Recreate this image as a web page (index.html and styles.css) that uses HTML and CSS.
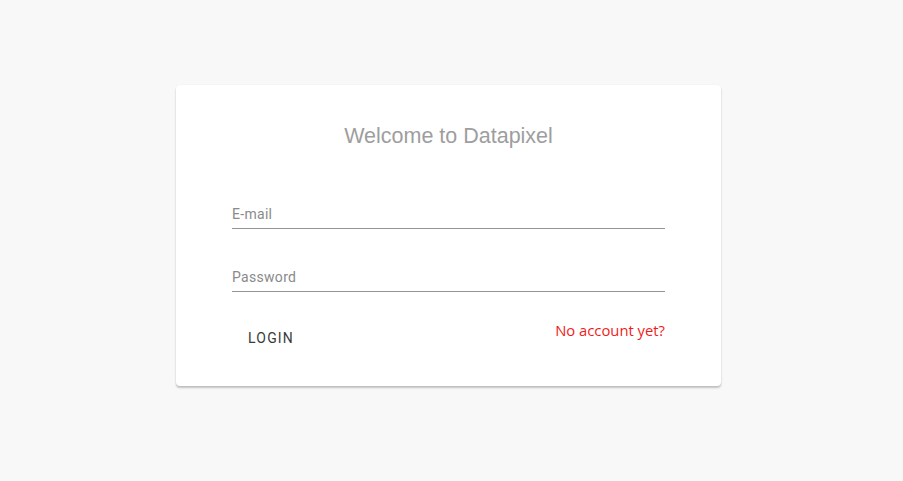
FILE: index.html
```html
<!DOCTYPE html>
<html>
<head>
<meta charset="utf-8">
<link rel="stylesheet" href="styles.css">
</head>
<body>
<div class="page">
  <div class="card">
    <h1 class="title">Welcome to Datapixel</h1>
    <form class="form">
      <label class="field">
        <input class="input" type="text" placeholder="E-mail">
      </label>
      <label class="field">
        <input class="input" type="password" placeholder="Password">
      </label>
      <div class="actions">
        <button class="login" type="button">LOGIN</button>
        <a class="signup" href="#">No account yet?</a>
      </div>
    </form>
  </div>
</div>
</body>
</html>
```
FILE: styles.css
```css
html, body {
  margin: 0;
  padding: 0;
  background: #f8f8f8;
  height: 100%;
}
.page {
  padding: 85px 0 0 176px;
}
.card {
  width: 545px;
  height: 301px;
  box-sizing: border-box;
  background: #fff;
  border-radius: 4px;
  box-shadow: 0 2px 2px rgba(0,0,0,0.22), 0 0 2px rgba(0,0,0,0.06);
  padding: 0 56px;
}
.title {
  margin: 0;
  padding-top: 37px;
  font-family: "Liberation Sans", Arial, sans-serif;
  font-weight: normal;
  font-size: 21.5px;
  line-height: 28px;
  color: #9e9e9e;
  text-align: center;
}
.form {
  display: flex;
  flex-direction: column;
  margin-top: 47px;
}
.field {
  display: block;
}
.field + .field {
  margin-top: 31px;
}
.input {
  display: block;
  width: 100%;
  box-sizing: border-box;
  border: 0;
  border-bottom: 1px solid #949494;
  outline: none;
  padding: 8px 0 5px;
  font-family: Roboto, sans-serif;
  font-size: 14px;
  letter-spacing: 0.3px;
  line-height: 18px;
  color: #333;
  background: transparent;
}
.input::placeholder {
  color: #8a8a8a;
}
.actions {
  display: flex;
  justify-content: space-between;
  align-items: flex-start;
  margin-top: 24px;
}
.login {
  border: 0;
  background: transparent;
  font-family: Roboto, sans-serif;
  font-size: 14px;
  font-weight: 400;
  letter-spacing: 1.2px;
  color: #3a3a3a;
  padding: 14px 16px;
  line-height: 16px;
  cursor: pointer;
}
.signup {
  font-family: "Open Sans", sans-serif;
  font-size: 14.8px;
  color: #f01c1c;
  text-decoration: none;
  line-height: 20px;
  padding-top: 4px;
}
```
